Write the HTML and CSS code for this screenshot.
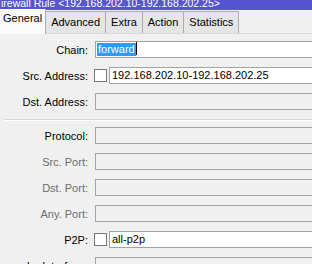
FILE: index.html
```html
<!DOCTYPE html>
<html lang="en">
<head>
  <meta charset="UTF-8" />
  <meta name="viewport" content="width=device-width, initial-scale=1" />
  <title>Firewall Rule</title>
  <link rel="stylesheet" href="styles.css">
</head>
<body>
  <div class="window">
    <div class="title">irewall Rule &lt;192.168.202.10-192.168.202.25&gt;</div>

    <div class="tabs">
      <div class="tab active">General</div>
      <div class="tab">Advanced</div>
      <div class="tab">Extra</div>
      <div class="tab">Action</div>
      <div class="tab">Statistics</div>
    </div>

    <div class="panel">
      <div class="row">
        <div class="label">Chain:</div>
        <div class="input"><span class="selected">forward</span><span class="caret"></span></div>
      </div>
      <div class="row">
        <div class="label">Src. Address:</div>
        <div class="check"></div>
        <div class="input">192.168.202.10-192.168.202.25</div>
      </div>
      <div class="row">
        <div class="label">Dst. Address:</div>
        <div class="input disabled"></div>
      </div>

      <div class="separator"></div>

      <div class="row">
        <div class="label">Protocol:</div>
        <div class="input disabled"></div>
      </div>
      <div class="row">
        <div class="label muted">Src. Port:</div>
        <div class="input disabled"></div>
      </div>
      <div class="row">
        <div class="label muted">Dst. Port:</div>
        <div class="input disabled"></div>
      </div>
      <div class="row">
        <div class="label muted">Any. Port:</div>
        <div class="input disabled"></div>
      </div>
      <div class="row p2p">
        <div class="label">P2P:</div>
        <div class="check"></div>
        <div class="input">all-p2p</div>
      </div>
      <div class="row">
        <div class="label">In. Interface:</div>
        <div class="input disabled"></div>
      </div>
    </div>
  </div>
</body>
</html>
```

FILE: styles.css
```css
* {
  box-sizing: border-box;
  font-family: 'Liberation Sans', Arial, sans-serif;
}

body {
  margin: 0;
  background: #f0f0f0;
  overflow: hidden;
}

.window {
  width: 312px;
  height: 264px;
  overflow: hidden;
  font-size: 11px;
  color: #000;
}

.title {
  height: 10px;
  overflow: hidden;
  background: #5556cf;
  color: #fff;
  font-size: 10.5px;
  line-height: 7px;
  padding-left: 1px;
  white-space: nowrap;
}

.tabs {
  display: flex;
  align-items: flex-end;
  height: 24px;
  border-bottom: 1px solid #d9d9d9;
}

.tab {
  height: 22px;
  padding: 0 5px;
  line-height: 21px;
  background: #e5e5e5;
  border: 1px solid #adadad;
  border-left: none;
  border-bottom: none;
}

.tab.active {
  height: 25px;
  margin-bottom: -1px;
  padding: 0 3px;
  line-height: 19px;
  background: #fafafa;
  border-top: none;
}

.panel {
  padding-top: 7px;
}

.row {
  display: flex;
  align-items: center;
  height: 17px;
  margin-bottom: 9px;
}

.row.p2p {
  margin-top: 1px;
}

.label {
  width: 88px;
  margin-right: 7px;
  text-align: right;
  white-space: nowrap;
}

.label.muted {
  color: #6d6d6d;
}

.input {
  flex: 1;
  height: 17px;
  margin-right: -6px;
  padding-left: 2px;
  line-height: 15px;
  background: #fff;
  border: 1px solid #a3a3a3;
  white-space: nowrap;
}

.input.disabled {
  background: #f0f0f0;
}

.selected {
  display: inline-block;
  margin-left: -1px;
  padding: 0 1px;
  line-height: 13px;
  background: #3399ff;
  color: #fff;
}

.caret {
  display: inline-block;
  width: 1px;
  height: 13px;
  vertical-align: -2px;
  background: #000;
}

.check {
  width: 13px;
  height: 13px;
  margin-left: -1px;
  margin-right: 2px;
  background: #fff;
  border: 1px solid #777;
}

.separator {
  height: 2px;
  margin: 1px 0 6px 4px;
  border-top: 1px solid #d8d8d8;
  border-bottom: 1px solid #fff;
}
```
